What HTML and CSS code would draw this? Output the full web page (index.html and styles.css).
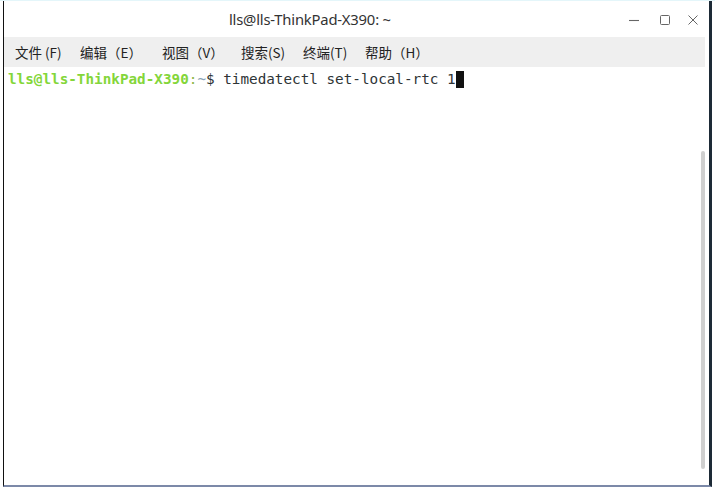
FILE: index.html
```html
<!DOCTYPE html>
<html lang="zh-CN">
<head>
    <meta charset="UTF-8">
    <meta name="viewport" content="width=device-width, initial-scale=1.0">
    <title>lls@lls-ThinkPad-X390: ~</title>
    <link rel="stylesheet" href="styles.css">
</head>
<body>
    <div class="window">
        <div class="titlebar">
            <span class="title">lls@lls-ThinkPad-X390: ~</span>
            <div class="controls">
                <svg class="btn-min" width="12" height="12" viewBox="0 0 12 12"><path d="M1 6.5h10" stroke="#666" stroke-width="1.1"/></svg>
                <svg class="btn-max" width="12" height="12" viewBox="0 0 12 12"><rect x="1.5" y="1.5" width="9" height="9" rx="1" fill="none" stroke="#666" stroke-width="1"/></svg>
                <svg class="btn-close" width="12" height="12" viewBox="0 0 12 12"><path d="M1.5 1.5l9 9M10.5 1.5l-9 9" stroke="#666" stroke-width="1"/></svg>
            </div>
        </div>

        <div class="menubar">
            <span class="menu m1">文件 (F)</span>
            <span class="menu m2">编辑（E）</span>
            <span class="menu m3">视图（V）</span>
            <span class="menu m4">搜索(S)</span>
            <span class="menu m5">终端(T)</span>
            <span class="menu m6">帮助（H）</span>
        </div>

        <div class="terminal">
            <div class="line"><span class="user">lls@lls-ThinkPad-X390</span><span class="colon">:</span><span class="path">~</span>$ timedatectl set-local-rtc 1<span class="cursor"></span></div>
            <div class="scrollbar"></div>
        </div>
    </div>
</body>
</html>
```

FILE: styles.css
```css
html, body {
    margin: 0;
    height: 100%;
}
body {
    background: #ffffff;
    padding: 0 3px 0 3px;
    box-sizing: border-box;
    border-top: 1px solid #e4f6fa;
}
.window {
    height: 486px;
    display: flex;
    flex-direction: column;
    background: #ffffff;
    border-left: 1px solid #111;
    border-right: 3px solid #1d2a36;
    border-bottom: 2px solid #7c89a8;
    box-sizing: border-box;
}
.titlebar {
    height: 36px;
    display: flex;
    align-items: center;
    padding-left: 225px;
    position: relative;
    font-family: "Noto Sans", sans-serif;
    font-size: 14.8px;
    color: #333;
}
.title {
    letter-spacing: -0.2px;
}
.controls {
    position: absolute;
    right: 10px;
    top: 13px;
    display: flex;
}
.btn-max {
    margin-left: 19px;
}
.btn-close {
    margin-left: 16px;
}
.menubar {
    height: 30px;
    margin-right: 4px;
    background: #efefef;
    display: flex;
    align-items: center;
    padding-left: 11px;
    font-family: "Noto Sans CJK SC", "Noto Sans", sans-serif;
    font-size: 13.5px;
    color: #222;
}
.menu {
    white-space: nowrap;
}
.m1 { width: 65px; }
.m2 { width: 82px; }
.m3 { width: 79px; }
.m4 { width: 62px; }
.m5 { width: 62px; }
.terminal {
    flex: 1;
    position: relative;
    padding: 4px 0 0 4px;
}
.line {
    font-family: "DejaVu Sans Mono", monospace;
    font-size: 14.3px;
    line-height: 17px;
    color: #2e3436;
    white-space: pre;
}
.user {
    color: #84d63a;
    font-weight: bold;
}
.colon {
    color: #8fb84a;
}
.path {
    color: #8aa3b5;
}
.cursor {
    display: inline-block;
    width: 8px;
    height: 17px;
    background: #111;
    vertical-align: top;
}
.scrollbar {
    position: absolute;
    right: 4px;
    top: 84px;
    bottom: 16px;
    width: 4px;
    background: #cfcfcf;
    border-radius: 2px;
}
```
